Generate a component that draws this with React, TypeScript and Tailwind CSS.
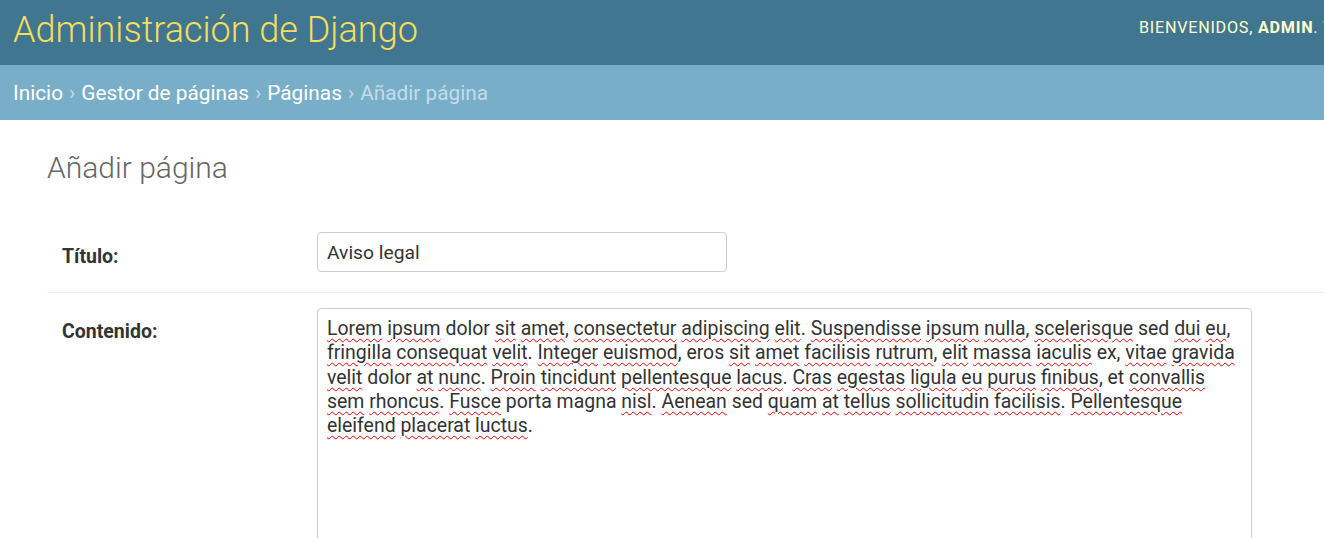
import React from "react";

const lines: [string, boolean][][] = [
  [["Lorem", true], [" ", false], ["ipsum", true], [" dolor ", false], ["sit", true], [" ", false], ["amet", true], [", ", false], ["consectetur", true], [" ", false], ["adipiscing", true], [" ", false], ["elit", true], [". ", false], ["Suspendisse", true], [" ", false], ["ipsum", true], [" ", false], ["nulla", true], [", ", false], ["scelerisque", true], [" sed ", false], ["dui", true], [" ", false], ["eu", true], [",", false]],
  [["fringilla", true], [" ", false], ["consequat", true], [" ", false], ["velit", true], [". ", false], ["Integer", true], [" ", false], ["euismod", true], [", eros ", false], ["sit", true], [" ", false], ["amet", true], [" ", false], ["facilisis", true], [" ", false], ["rutrum", true], [", ", false], ["elit", true], [" ", false], ["massa", true], [" ", false], ["iaculis", true], [" ex, ", false], ["vitae", true], [" ", false], ["gravida", true]],
  [["velit", true], [" dolor ", false], ["at", true], [" ", false], ["nunc", true], [". ", false], ["Proin", true], [" ", false], ["tincidunt", true], [" ", false], ["pellentesque", true], [" ", false], ["lacus", true], [". ", false], ["Cras", true], [" ", false], ["egestas", true], [" ", false], ["ligula", true], [" ", false], ["eu", true], [" ", false], ["purus", true], [" ", false], ["finibus", true], [", et ", false], ["convallis", true]],
  [["sem", true], [" ", false], ["rhoncus", true], [". ", false], ["Fusce", true], [" porta magna ", false], ["nisl", true], [". ", false], ["Aenean", true], [" sed ", false], ["quam", true], [" ", false], ["at", true], [" ", false], ["tellus", true], [" ", false], ["sollicitudin", true], [" ", false], ["facilisis", true], [". ", false], ["Pellentesque", true]],
  [["eleifend", true], [" ", false], ["placerat", true], [" ", false], ["luctus", true], [".", false]],
];

export default function App() {
  return (
    <div className="min-h-screen bg-white overflow-hidden" style={{ fontFamily: "Roboto, 'Liberation Sans', sans-serif" }}>
      {/* Header */}
      <div className="h-[65px] bg-[#417690] flex items-center pl-[13px] overflow-hidden">
        <div className="flex-1 text-[36px] font-light text-[#f5dd5d] leading-none pb-[6px] whitespace-nowrap">
          Administración de Django
        </div>
        <div className="shrink-0 w-[185px] whitespace-nowrap text-[16.2px] tracking-[0.74px] text-[#ffc] uppercase pb-[8px]">
          Bienvenidos, <strong className="font-bold">admin</strong>. Ver el sitio
        </div>
      </div>
      {/* Breadcrumbs */}
      <div className="h-[55px] bg-[#79aec8] flex items-center pl-[13px] pt-[2px] text-[20.8px] text-[#c4dce8] whitespace-nowrap">
        <span className="text-white">Inicio</span>
        <span className="mx-[6px]">›</span>
        <span className="text-white">Gestor de páginas</span>
        <span className="mx-[6px]">›</span>
        <span className="text-white">Páginas</span>
        <span className="mx-[6px]">›</span>
        <span>Añadir página</span>
      </div>
      {/* Content */}
      <div className="pl-[47px] pt-[30px]">
        <h1 className="text-[30px] font-light text-[#666] leading-[36px] mb-[32px]">Añadir página</h1>
        <div className="flex border-b border-[#eee] pt-[14px] pb-[20px]">
          <label className="w-[270px] shrink-0 pl-[15px] pt-[10px] text-[19.5px] font-bold text-[#333]">Título:</label>
          <div className="w-[410px] h-[40px] border border-[#ccc] rounded-[4px] pl-[9px] pt-[3px] flex items-center text-[19.25px] text-[#333]">
            Aviso legal
          </div>
        </div>
        <div className="flex pt-[15px]">
          <label className="w-[270px] shrink-0 pl-[15px] pt-[9px] text-[19.5px] font-bold text-[#333]">Contenido:</label>
          <div className="w-[935px] h-[300px] border border-[#ccc] rounded-[4px] pl-[9px] pt-[8px] text-[19.45px] leading-[24.3px] text-[#333]">
            {lines.map((line, i) => (
              <div key={i} className="whitespace-pre">
                {line.map(([t, u], j) =>
                  u ? (
                    <span key={j} className="underline decoration-wavy decoration-[#e00] decoration-1 underline-offset-[3px]">{t}</span>
                  ) : (
                    <span key={j}>{t}</span>
                  )
                )}
              </div>
            ))}
          </div>
        </div>
      </div>
    </div>
  );
}
